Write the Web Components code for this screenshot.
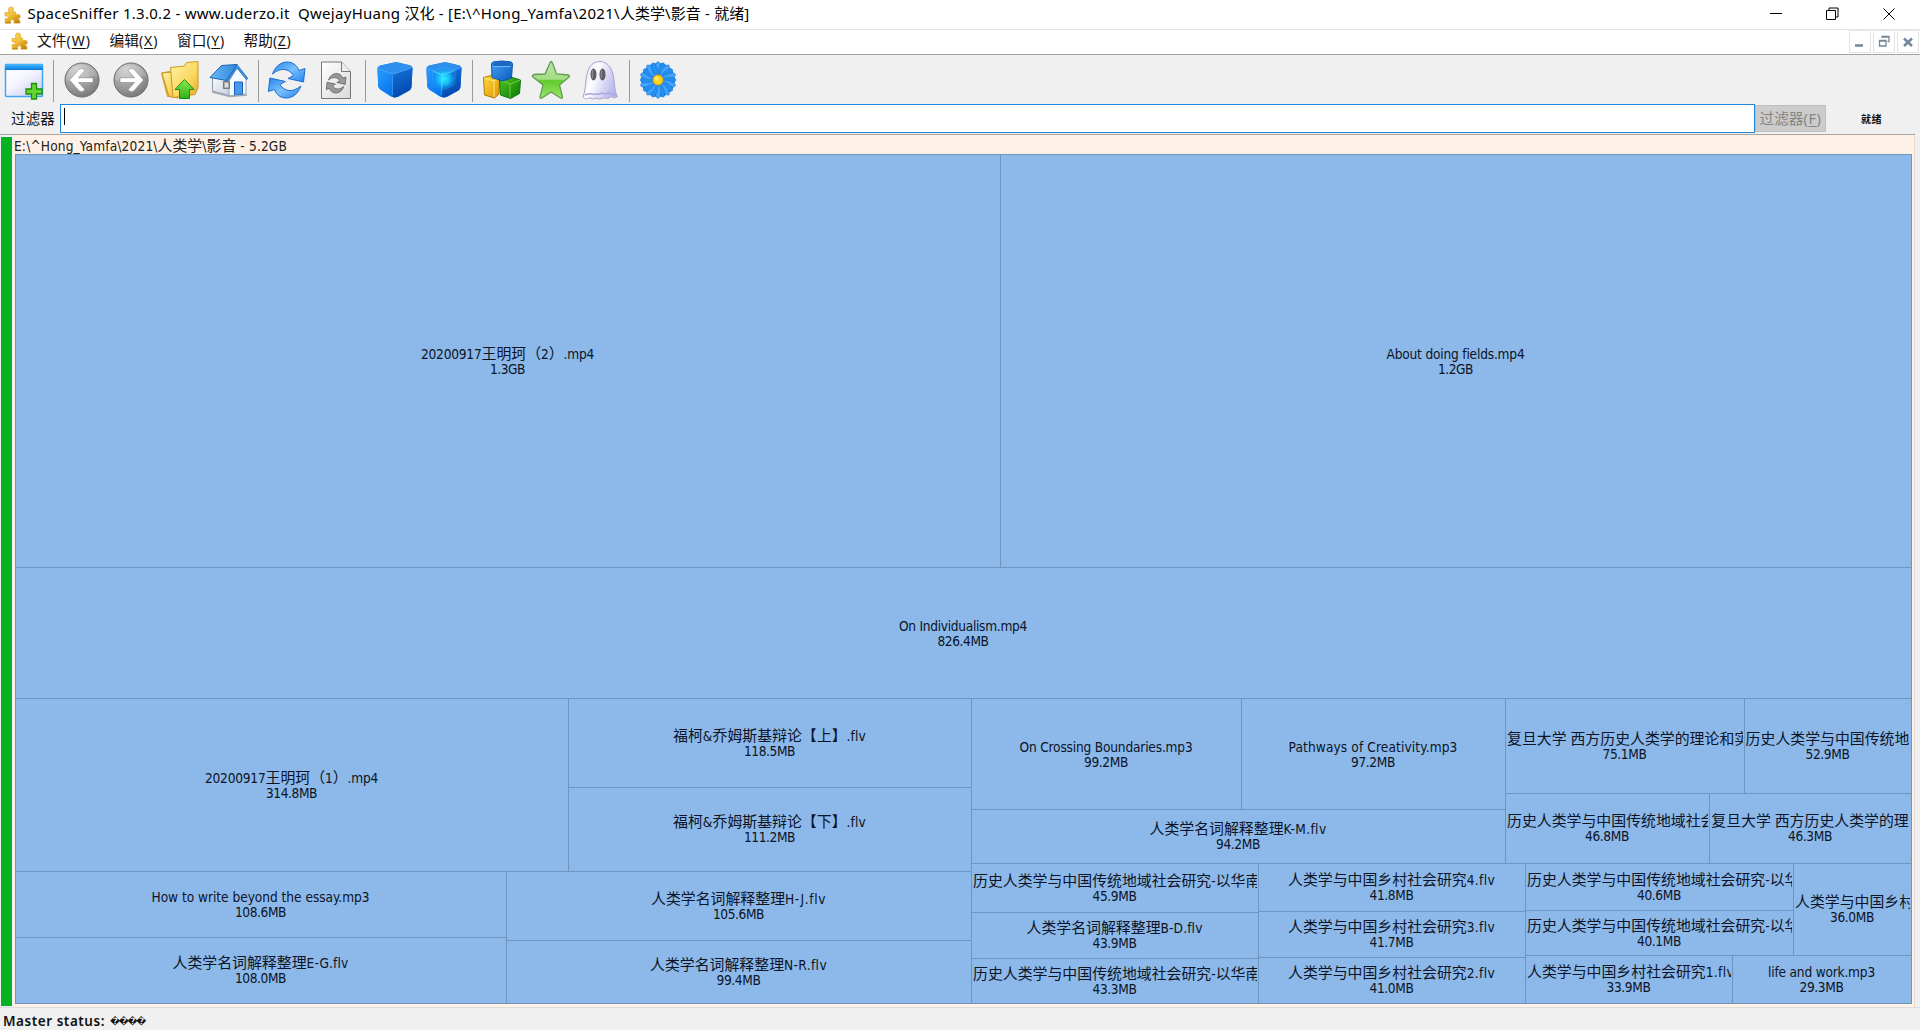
<!DOCTYPE html>
<html lang="zh-CN">
<head>
<meta charset="utf-8">
<title>SpaceSniffer</title>
<style>
html,body{margin:0;height:100%;overflow:hidden;background:#f0f0f0}
</style>
</head>
<body>
<sniffer-app></sniffer-app>
<script>
const UI = '"Noto Sans","Noto Sans CJK SC",sans-serif';
const define = (name, html, setup) => {
  const t = document.createElement('template');
  t.innerHTML = html;
  customElements.define(name, class extends HTMLElement {
    connectedCallback() {
      if (this.shadowRoot) return;
      this.attachShadow({mode: 'open'}).append(t.content.cloneNode(true));
      if (setup) setup.call(this, this.shadowRoot);
    }
  });
};

/* One line of text; CJK runs may use their own size, and the spacing is tuned to a given width. */
define('text-run', `<style>
:host{display:block;white-space:pre;flex:none}
.c{font-size:var(--cjk,1em);font-family:"Noto Sans CJK SC",sans-serif;line-height:0}
span{display:inline-block;}
.c,.l{display:inline}
u{text-decoration-thickness:1px;text-underline-offset:2px}
</style><span id="s"></span>`, function (root) {
  const s = root.getElementById('s'), text = this.getAttribute('text');
  const key = this.getAttribute('key');
  for (const part of text.match(/[\u3000-\u9fff\uff00-\uffef]+|[^\u3000-\u9fff\uff00-\uffef]+/g)) {
    const e = document.createElement('span');
    e.className = /[\u3000-\u9fff\uff00-\uffef]/.test(part) ? 'c' : 'l';
    if (key && part.includes(key)) {
      const i = part.indexOf(key), u = document.createElement('u');
      u.textContent = key;
      e.append(part.slice(0, i), u, part.slice(i + 1));
    } else e.textContent = part;
    s.append(e);
  }
  const w = +this.getAttribute('w');
  if (w) {
    const latin = [...s.querySelectorAll('.l')];
    const n = latin.reduce((a, e) => a + e.textContent.length, 0);
    if (n) {
      const d = (w - s.getBoundingClientRect().width) / n;
      latin.forEach(e => e.style.letterSpacing = d + 'px');
    } else s.style.letterSpacing = (w - s.getBoundingClientRect().width) / text.length + 'px';
  }
});

define('puzzle-icon', `<style>:host{display:block;flex:none;width:17px;height:18px}svg{display:block}</style>
<svg width="17" height="18" viewBox="0 0 17 18"><defs><linearGradient id="g" x2=".6" y2="1"><stop stop-color="#fbd95c"/><stop offset=".55" stop-color="#f3bf38"/><stop offset="1" stop-color="#c98b0c"/></linearGradient></defs>
<path d="M1 6.500h4.200Q4.300 5 4.500 3.200 5 .7 7.500.9 9.800 1.200 9.500 4L9 5.800l2.800.4-.4 3.300q.8-1.300 2.600-1.200 2.400.3 2.300 2.300-.2 1.800-1.600 1.900l-.7.100.2 1.200 1.700.4v2.900H10q.7-3.400-1.700-3.600-2.300.2-1.700 3.700H1.200v-4.600q2.600.5 3.100-1.300Q4.200 9.400 1 9.900z" fill="url(#g)" stroke="#dba531" stroke-width=".7"/><path d="M1.600 16.700h4.800M10.400 16.600h5.200" stroke="#b98010" stroke-width=".9"/></svg>`);

const ICONS = {
window: `<defs><linearGradient id="a" x2=".8" y2="1"><stop stop-color="#fff"/><stop offset=".5" stop-color="#f5f5ff"/><stop offset="1" stop-color="#cdcdf5"/></linearGradient><linearGradient id="b" x2="0" y2="1"><stop stop-color="#45bcff"/><stop offset="1" stop-color="#0878e0"/></linearGradient></defs>
<rect x="1.500" y="4.500" width="37" height="32" rx="1" fill="url(#a)" stroke="#41a4f4" stroke-width="1.500"/><path d="M1 4h38v6H1z" fill="url(#b)"/><path d="M27.500 23.500h5v5.500H38v5h-5.500v5h-5v-5H22v-5h5.500z" fill="#62d435" stroke="#199008" stroke-width="1.300"/>`,
back: `<defs><radialGradient id="a" cx=".35" cy=".2" r=".9"><stop stop-color="#ccc"/><stop offset=".6" stop-color="#999"/><stop offset="1" stop-color="#717171"/></radialGradient></defs><circle cx="20" cy="20" r="17" fill="url(#a)" stroke="#6e6e6e"/><path d="M3.800 20a16.200 16.200 0 0 1 32-3C25 13 15 24 3.800 20z" fill="#fff" opacity=".18"/><path d="M31 17.800H16.500l6.500-7.500q-3-3.500-6-1L7.500 20 17 30.700q3 2.500 6-1l-6.500-7.200H31z" fill="#fff" stroke="#777" stroke-width=".5"/>`,
folder: `<defs><linearGradient id="a" x2="1" y2="1"><stop stop-color="#fff3a8"/><stop offset=".6" stop-color="#fad65e"/><stop offset="1" stop-color="#e5aa29"/></linearGradient><linearGradient id="b" x2="0" y2="1"><stop stop-color="#8bea55"/><stop offset="1" stop-color="#31af17"/></linearGradient></defs><path d="M1.500 13l8-1.500 4 24.500-6 .5z" fill="#f4c63c" stroke="#cc9727"/><path d="M2 13l11-1 5 26-9-1.500z" fill="url(#a)" stroke="#cc9727"/><path d="M10.500 7.500l14-1.500 2-3.500L38 1.500v26l-3 7-22 3z" fill="url(#a)" stroke="#cc9727"/><path d="M24.500 19.500l9.500 10h-4.500v9h-10v-9H15z" fill="url(#b)" stroke="#168e0c"/>`,
house: `<defs><linearGradient id="a" x2="1"><stop stop-color="#6bbaf5"/><stop offset="1" stop-color="#2e86dc"/></linearGradient><linearGradient id="b" x2="1" y2="1"><stop stop-color="#fff"/><stop offset="1" stop-color="#c2cedb"/></linearGradient></defs><path d="M3.500 18L14 12l8 8v16L3.500 31z" fill="url(#b)" stroke="#8998aa"/><path d="M20 21l8-13 9 11v15l-17 2z" fill="#f4f8ff" stroke="#98a6b8"/><path d="M1 17.500L12.500 5.500 28 4.500 17.500 20.500z" fill="url(#a)" stroke="#1464b4"/><path d="M17.500 20.500L28 4.500l11 14-1.500 1L28 8 19 21z" fill="#3b91df" stroke="#1464b4" stroke-width=".6"/><path d="M14.500 21.500h6v7h-6z" fill="#aaa" stroke="#777"/><path d="M16 23h3v4h-3z" fill="#ddd"/><path d="M25.500 22h8v12.500l-8 1z" fill="#489ae9" stroke="#155db6"/><path d="M3 32l18 4.500 17-1.500" fill="none" stroke="#a3aab4" stroke-width="1.500"/>`,
refresh: `<defs><linearGradient id="a" x2="1" y2="1"><stop stop-color="#2c83e5"/><stop offset=".5" stop-color="#78c0ff"/><stop offset="1" stop-color="#2383ee"/></linearGradient></defs><path id="p" d="M5.500 14C9 4 17 .5 24 2.500c3.500 1 6.500 4 8 8l6-2L36.500 22 21 18.500l5.500-3C22 8.500 14 7 5.500 14z" fill="url(#a)" stroke="#1d6fcc"/><use href="#p" transform="rotate(180 19.700 20)"/>`,
doc: `<defs><linearGradient id="a" x2="1" y2="1"><stop stop-color="#fff"/><stop offset="1" stop-color="#dadada"/></linearGradient></defs><path d="M5.500 2h20l9 9.500v27h-29z" fill="url(#a)" stroke="#777"/><path d="M25.500 2v9.500h9" fill="#eee" stroke="#777"/><g transform="translate(9.500 12.500) scale(.54)"><path id="p" d="M5.500 14C9 4 17 .5 24 2.500c3.500 1 6.500 4 8 8l6-2L36.500 22 21 18.500l5.500-3C22 8.500 14 7 5.500 14z" fill="#999" stroke="#555" stroke-width="1.300"/><use href="#p" transform="rotate(180 19.700 20)"/></g>`,
cube: `<defs><linearGradient id="a" x2=".6" y2="1"><stop stop-color="#2a9dff"/><stop offset="1" stop-color="#0678ee"/></linearGradient><linearGradient id="b" x2=".3" y2="1"><stop stop-color="#1673df"/><stop offset="1" stop-color="#0448ac"/></linearGradient></defs><path d="M2.500 9q0-2.500 3-3.500L18 2.700q3-.7 6 0l10.500 2.500q3 1 3 3.500l-1 18q0 2.500-2.500 4l-10.500 6q-3.500 1.700-6.500-.2L6 30q-2.500-1.500-2.800-4z" fill="#0869d6"/><path d="M2.500 8l13 5.500q2 .8 2 3V37q-1-.2-2-.8L6 30q-2.500-1.500-2.800-4z" fill="url(#a)"/><path d="M37.500 8L19.500 14q-2 .8-2 3v20q2.500 1 5-.4L34 30.700q2.500-1.500 2.500-4z" fill="url(#b)"/><path d="M2.600 8q.5-1.800 3-2.500L18 2.700q3-.7 6 0l10.500 2.500q2.500.8 3 2.500L19.500 14q-2 .6-4-.3z" fill="#2d90ee"/><path d="M3.500 8.500l12 5q2 .8 4 0L36 8.200M17.500 15v20" fill="none" stroke="#5bb4ff" stroke-opacity=".7" stroke-width=".8"/>`,
blocks: `<defs><linearGradient id="a" x2="1" y2="1"><stop stop-color="#47a5f5"/><stop offset="1" stop-color="#0759bb"/></linearGradient><linearGradient id="b" x2="1" y2="1"><stop stop-color="#ffdc3c"/><stop offset="1" stop-color="#dc9500"/></linearGradient><linearGradient id="c" x2="1" y2="1"><stop stop-color="#53c51e"/><stop offset="1" stop-color="#087907"/></linearGradient></defs><path d="M1.500 17.500l8-2 8 2-.5 16.500-4.500 4L2.500 35z" fill="url(#b)" stroke="#b17b09" stroke-linejoin="round"/><path d="M2 18l10 3v16M12 21l5-3" fill="none" stroke="#ffe67e"/><path d="M17.500 20l11-3 10 3-1 13.500-9 5-10-3.500z" fill="url(#c)" stroke="#0b750b" stroke-linejoin="round"/><path d="M18 20l10 4v13.500M28 24l10-4" fill="none" stroke="#7ddb50" stroke-opacity=".8"/><path d="M9.500 3.500Q10 2 12 1.800L20 1l8 .8q2.200.2 2.500 1.700l-1 14.500-9 3-10.500-3.500z" fill="url(#a)" stroke="#0755ae" stroke-linejoin="round"/><path d="M10.500 3l9.500-1.500 9.500 1.500-1.500 3.500H12z" fill="#1c66c4"/><path d="M11.500 6.500h17" stroke="#69bdff"/>`,
star: `<defs><linearGradient id="a" x2="0" y2="1"><stop stop-color="#bde5a8"/><stop offset=".48" stop-color="#a4dd85"/><stop offset=".52" stop-color="#62ca2d"/><stop offset="1" stop-color="#9be66a"/></linearGradient></defs><path d="M20 1.500q1 0 2 3l3.500 9.500 12 1q2 1 0 2.500L28.500 25l3 12q0 2-2 1L20 32l-9 6q-2 1-2-1l3-12-10-8q-1.500-1 .5-2.500L14 14l4.500-10q.7-2.500 1.500-2.500z" fill="url(#a)" stroke="#5f9d50" stroke-width="1.300"/>`,
ghost: `<defs><linearGradient id="a" x2="1" y2=".4"><stop stop-color="#d8d7f4"/><stop offset=".4" stop-color="#fff"/><stop offset="1" stop-color="#bcb9ec"/></linearGradient></defs><path d="M3 37c3-6 2-15 4-23C9 5 14 1.500 20 1.500S31 6 33 14c2 9 1 17 4.500 22.500-2 2-5 1-6.500 0-2 2-5 3-7 1-3 2-6 2-8 .5-3 1.500-5 1-6-.5-2 1.500-5 2-7-.5z" fill="url(#a)" stroke="#a6a3d1"/><path d="M5 35q5-2 7-1 6 1 10-1 4 2 6 0 4 1 8 2" fill="none" stroke="#aaa7df" stroke-width="1.500"/><ellipse cx="13.500" cy="14.500" rx="3" ry="6" fill="#5c5b65"/><ellipse cx="22.500" cy="14.500" rx="3" ry="6" fill="#5c5b65"/><path d="M12.500 10v8M21.500 10v8" stroke="#888" stroke-width="1.500"/>`,
flower: `<circle cx="20" cy="20" r="17" fill="#1784ea"/><g id="f"></g><circle cx="20" cy="20" r="5" fill="#ffd21c" stroke="#dda40b"/><circle cx="18.500" cy="18.500" r="2" fill="#ffec64"/>`
};
ICONS.cubeGlow = ICONS.cube + `<defs><radialGradient id="r"><stop stop-color="#2af2ff"/><stop offset=".5" stop-color="#16cfff" stop-opacity=".8"/><stop offset="1" stop-color="#0b91f5" stop-opacity=".2"/></radialGradient></defs><path d="M8.500 11L19 7.500q1-.3 2 0L31 10q1 .3 1 1.500L30.500 24q0 1-1.500 1.700l-8 4q-2 1-4 0L10 25q-1-.5-1-2z" fill="url(#r)" stroke="#4cc4ff" stroke-opacity=".4" stroke-width=".6"/><path d="M9.500 11.500L18 15l12.500-4M18 15v14" fill="none" stroke="#7cf6ff" stroke-opacity=".5"/>`;

define('tool-icon', `<style>:host{display:flex;width:48.800px;height:40px;justify-content:center;flex:none}svg{display:block;width:40px;height:40px}</style><svg viewBox="0 0 40 40"></svg>`, function (root) {
  const svg = root.querySelector('svg'), kind = this.getAttribute('kind');
  svg.innerHTML = ICONS[kind === 'forward' ? 'back' : kind];
  if (kind === 'forward') svg.querySelector('path:last-child').setAttribute('transform', 'matrix(-1 0 0 1 40 0)');
  if (kind === 'flower') {
    let out = '';
    for (let i = 0; i < 20; i++)
      out += `<ellipse cx="20" cy="${i % 2 ? 9 : 8.500}" rx="2.700" ry="7" fill="${i % 2 ? '#2590f2' : '#43a4fb'}" stroke="#116cd4" stroke-width=".4" transform="rotate(${i * 18} 20 20)"/>`;
    svg.querySelector('#f').innerHTML = out;
  }
});
define('tool-sep', `<style>:host{display:flex;width:9.800px;height:42px;justify-content:center;flex:none}i{width:1px;background:#999}</style><i></i>`);

define('title-bar', `<style>
:host{display:flex;height:29px;background:#fff;border-bottom:1px solid #e3e3e3;box-sizing:content-box;padding:0 24px 0 4px;align-items:center;font:15px/24px ${UI};--cjk:15px;color:#000}
text-run{margin:-3px 0 0 6.500px;flex:1}
svg{display:block}
.b{display:flex;gap:44px;margin-top:-1px}
</style><puzzle-icon></puzzle-icon>
<text-run w="722" text="SpaceSniffer 1.3.0.2 - www.uderzo.it  QwejayHuang 汉化 - [E:\\^Hong_Yamfa\\2021\\人类学\\影音 - 就绪]"></text-run>
<div class="b"><svg width="12" height="14"><path d="M0 6.500h12" stroke="#000"/></svg>
<svg width="13" height="14"><path d="M.5 3.500h9v9h-9zM3 3.500v-2.500h9v9h-2.500" fill="none" stroke="#000"/></svg>
<svg width="13" height="14"><path d="M.5 1.500l11 11M11.500 1.500l-11 11" stroke="#000"/></svg></div>`);

define('menu-bar', `<style>
:host{display:flex;height:24px;background:#fff;border-bottom:1px solid #a3a3a3;font:14px/22px ${UI};--cjk:14.700px;color:#111;padding-left:11px}
puzzle-icon{margin-top:2px}
nav{display:flex;gap:18.500px;margin-left:9px;flex:1}
.m{display:flex;gap:2px;margin-right:1px}
.m svg{display:block;border:1px solid #e4e4e4;width:20px;height:21px;margin-top:0}
</style><puzzle-icon></puzzle-icon><nav>
<text-run w="54" text="文件(W)" key="W"></text-run><text-run w="49" text="编辑(X)" key="X"></text-run><text-run w="48" text="窗口(Y)" key="Y"></text-run><text-run w="48" text="帮助(Z)" key="Z"></text-run></nav>
<div class="m"><svg><path d="M5 14.500h8" stroke="#74889c" stroke-width="2.500"/></svg>
<svg><path d="M5.500 10h6.500v5H5.500zM5 9.500h7.500M8 7V5.500h7v5h-1.500M7.500 6h8" fill="none" stroke="#74889c" stroke-width="1.300"/></svg>
<svg><path d="M6 7.500l8 7.500M14 7.500L6 15" stroke="#74889c" stroke-width="2.500"/></svg></div>`);

define('tool-bar', `<style>:host{display:flex;height:44px;padding-top:5px;align-items:flex-start;margin-left:-.5px}</style>
<tool-icon kind="window"></tool-icon><tool-sep></tool-sep><tool-icon kind="back"></tool-icon><tool-icon kind="forward"></tool-icon><tool-icon kind="folder"></tool-icon><tool-icon kind="house"></tool-icon><tool-sep></tool-sep><tool-icon kind="refresh"></tool-icon><tool-icon kind="doc"></tool-icon><tool-sep></tool-sep><tool-icon kind="cube"></tool-icon><tool-icon kind="cubeGlow"></tool-icon><tool-sep></tool-sep><tool-icon kind="blocks"></tool-icon><tool-icon kind="star"></tool-icon><tool-icon kind="ghost"></tool-icon><tool-sep></tool-sep><tool-icon kind="flower"></tool-icon>`);

define('filter-bar', `<style>
:host{display:flex;height:30px;align-items:flex-start;font:14.500px/28px ${UI};color:#111;padding-left:11px}
.f{width:1693px;height:27px;border:1px solid #1e87dc;background:#fff;margin-left:5px;display:flex;flex:none}
.f i{width:1px;height:17px;background:#000;margin:3px 0 0 3px}
.b{width:69px;height:25px;background:#ccc;border:1px solid #bfbfbf;margin:1px 0 0 0;color:#858585;line-height:25px;display:flex;justify-content:center;--cjk:14.700px}
.r{font-size:10px;font-weight:700;margin:1px 0 0 35px}
</style><text-run w="44" text="过滤器"></text-run><div class="f"><i></i></div><div class="b"><text-run w="62" text="过滤器(F)" key="F"></text-run></div><text-run class="r" w="21" text="就绪"></text-run>`);

/* A leaf of the treemap: file name above its size. Names wider than the tile are clipped. */
define('file-tile', `<style>
:host{display:flex;flex-direction:column;justify-content:center;align-items:center;box-sizing:border-box;min-width:0;min-height:0;border:solid #6e95bd;border-width:0 1px 1px 0;background:#8cb9ea;padding:1px 1px 0 1px;font:13.600px/15px "DejaVu Sans Condensed","Noto Sans",sans-serif;--cjk:14.900px;color:#0c1426}
div{max-width:100%;display:flex}
#z{margin-left:-1px}
#n{margin-left:-1px}
:host([clip]) #n{margin-left:0;overflow-x:clip;overflow-y:visible}
</style><div id="n"></div><div id="z"></div>`, function (root) {
  const add = (id, text, w) => {
    const t = document.createElement('text-run');
    t.setAttribute('text', text);
    if (w) t.setAttribute('w', w);
    root.getElementById(id).append(t);
    return t;
  };
  const size = this.getAttribute('size');
  const name = add('n', this.getAttribute('name'), this.getAttribute('w'));
  add('z', size, {5: 35, 6: 44, 7: 51}[size.length]);
  if (name.getBoundingClientRect().width > this.clientWidth - 2) this.setAttribute('clip', '');
});
define('tile-split', `<style>:host{display:flex;min-width:0;min-height:0;flex-direction:row}:host([col]){flex-direction:column}</style><slot></slot>`);

/* Leaves carry name, size and text width; every split lists [pixels, child] pairs. */
const L = (n, s, w) => ({n, s, w});
const LONG = '历史人类学与中国传统地域社会研究-以华南';
const TREE = {col: 1, k: [
  [413, {k: [[985, L('20200917王明珂（2）.mp4', '1.3GB', 173)], [911, L('About doing fields.mp4', '1.2GB', 138)]]}],
  [131, L('On Individualism.mp4', '826.4MB', 128)],
  [305, {k: [
    [956, {col: 1, k: [
      [173, {k: [[553, L('20200917王明珂（1）.mp4', '314.8MB', 173)], [403, {col: 1, k: [[89, L('福柯&乔姆斯基辩论【上】.flv', '118.5MB', 193)], [84, L('福柯&乔姆斯基辩论【下】.flv', '111.2MB', 193)]]}]]}],
      [132, {k: [[491, {col: 1, k: [[66, L('How to write beyond the essay.mp3', '108.6MB', 218)], [66, L('人类学名词解释整理E-G.flv', '108.0MB', 176)]]}],
        [465, {col: 1, k: [[69, L('人类学名词解释整理H-J.flv', '105.6MB', 175)], [63, L('人类学名词解释整理N-R.flv', '99.4MB', 177)]]}]]}]
    ]}],
    [940, {col: 1, k: [
      [165, {k: [
        [534, {col: 1, k: [[111, {k: [[270, L('On Crossing Boundaries.mp3', '99.2MB', 173)], [264, L('Pathways of Creativity.mp3', '97.2MB', 169)]]}], [54, L('人类学名词解释整理K-M.flv', '94.2MB', 177)]]}],
        [406, {col: 1, k: [[95, {k: [[239, L('复旦大学 西方历史人类学的理论和实', '75.1MB')], [167, L('历史人类学与中国传统地', '52.9MB')]]}],
          [70, {k: [[204, L('历史人类学与中国传统地域社会', '46.8MB')], [202, L('复旦大学 西方历史人类学的理', '46.3MB')]]}]]}]
      ]}],
      [140, {k: [
        [287, {col: 1, k: [[49, L(LONG, '45.9MB')], [46, L('人类学名词解释整理B-D.flv', '43.9MB', 176)], [45, L(LONG, '43.3MB')]]}],
        [267, {col: 1, k: [[48, L('人类学与中国乡村社会研究4.flv', '41.8MB', 207)], [46, L('人类学与中国乡村社会研究3.flv', '41.7MB', 207)], [46, L('人类学与中国乡村社会研究2.flv', '41.0MB', 207)]]}],
        [386, {col: 1, k: [
          [92, {k: [[268, {col: 1, k: [[47, L(LONG.slice(0, -1), '40.6MB')], [45, L(LONG.slice(0, -1), '40.1MB')]]}], [118, L('人类学与中国乡村', '36.0MB')]]}],
          [48, {k: [[207, L('人类学与中国乡村社会研究1.flv', '33.9MB', 207)], [179, L('life and work.mp3', '29.3MB', 107)]]}]
        ]}]
      ]}]
    ]}]
  ]}]
]};

define('tree-map', `<style>
:host{display:flex;flex-direction:column;background:#fff1e5;border-right:1px solid #e8ddd2;padding:0 2px 3px 2px;width:1897px;box-sizing:content-box;font:13.600px/23px "DejaVu Sans Condensed","Noto Sans",sans-serif;--cjk:14.900px;color:#222}
.t{height:19px;margin-left:-1px}
#m{display:flex;width:1896px;height:849px;border:solid #6e95bd;border-width:1px 0 0 1px}
</style><text-run class="t" w="273" text="E:\\^Hong_Yamfa\\2021\\人类学\\影音 - 5.2GB"></text-run><div id="m"></div>`, function (root) {
  const build = n => {
    if (n.n) {
      const e = document.createElement('file-tile');
      e.setAttribute('name', n.n); e.setAttribute('size', n.s);
      if (n.w) e.setAttribute('w', n.w);
      return e;
    }
    const e = document.createElement('tile-split');
    if (n.col) e.setAttribute('col', '');
    for (const [size, kid] of n.k) {
      const c = build(kid);
      c.style.flex = `0 0 ${size}px`;
      e.append(c);
    }
    return e;
  };
  const tree = build(TREE);
  tree.style.flex = '1';
  root.getElementById('m').append(tree);
});

define('status-bar', `<style>:host{display:flex;align-items:center;height:23px;padding:4px 0 0 3px;box-sizing:border-box;border-top:1px solid #dedede;font:600 13.500px/18px ${UI};color:#111}
.q{font:bold 9px/18px "DejaVu Sans",sans-serif;margin-left:5px}</style><text-run w="102" text="Master status:"></text-run><text-run class="q" w="35" text="&#xFFFD;&#xFFFD;&#xFFFD;&#xFFFD;"></text-run>`);

define('sniffer-app', `<style>
:host{display:flex;flex-direction:column;width:1920px;height:1030px;background:#f0f0f0;overflow:hidden}
.v{display:flex;border-top:1px solid #a5a5a5;width:1915px;height:872px}
.g{width:11px;margin:2px 1px 1px 1px;background:#07b225;flex:none}
</style><title-bar></title-bar><menu-bar></menu-bar><tool-bar></tool-bar><filter-bar></filter-bar><div class="v"><div class="g"></div><tree-map></tree-map></div><status-bar></status-bar>`);
</script>
</body>
</html>
